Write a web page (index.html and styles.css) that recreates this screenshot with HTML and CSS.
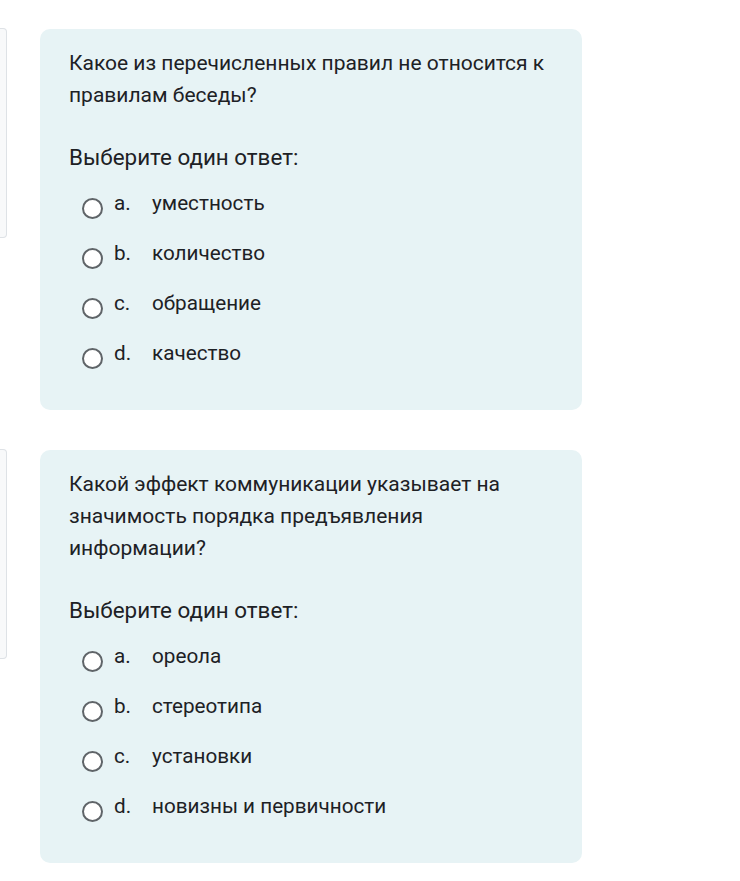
FILE: index.html
```html
<!DOCTYPE html>
<html lang="ru">
<head>
<meta charset="utf-8">
<link rel="stylesheet" href="styles.css">
</head>
<body>
<div class="page">
  <div class="question">
    <div class="info"></div>
    <div class="card">
      <div class="qtext">Какое из перечисленных правил не относится к правилам беседы?</div>
      <div class="prompt">Выберите один ответ:</div>
      <div class="answers">
        <div class="opt"><span class="radio"></span><span class="num">a.</span><span class="label">уместность</span></div>
        <div class="opt"><span class="radio"></span><span class="num">b.</span><span class="label">количество</span></div>
        <div class="opt"><span class="radio"></span><span class="num">c.</span><span class="label">обращение</span></div>
        <div class="opt"><span class="radio"></span><span class="num">d.</span><span class="label">качество</span></div>
      </div>
    </div>
  </div>
  <div class="question">
    <div class="info"></div>
    <div class="card">
      <div class="qtext">Какой эффект коммуникации указывает на значимость порядка предъявления информации?</div>
      <div class="prompt">Выберите один ответ:</div>
      <div class="answers">
        <div class="opt"><span class="radio"></span><span class="num">a.</span><span class="label">ореола</span></div>
        <div class="opt"><span class="radio"></span><span class="num">b.</span><span class="label">стереотипа</span></div>
        <div class="opt"><span class="radio"></span><span class="num">c.</span><span class="label">установки</span></div>
        <div class="opt"><span class="radio"></span><span class="num">d.</span><span class="label">новизны и первичности</span></div>
      </div>
    </div>
  </div>
</div>
</body>
</html>
```
FILE: styles.css
```css
html, body {
  margin: 0;
  padding: 0;
  background: #ffffff;
}
body {
  font-family: Roboto, "Noto Sans", "Liberation Sans", sans-serif;
  color: #1d2125;
}
.page {
  padding-top: 28px;
}
.question {
  display: flex;
  align-items: flex-start;
  gap: 33px;
  margin-bottom: 39px;
}
.info {
  flex-shrink: 0;
  width: 6px;
  height: 208px;
  background: #f8f9fa;
  border: 1px solid #dee2e6;
  border-left: none;
  border-radius: 0 4px 4px 0;
}
.card {
  box-sizing: border-box;
  width: 542px;
  margin-top: 1px;
  background: #e7f3f5;
  border-radius: 10px;
  padding: 18px 30px 32px 29px;
}
.qtext {
  font-size: 21px;
  line-height: 32px;
}
.prompt {
  margin-top: 30px;
  font-size: 22.4px;
  line-height: 32px;
}
.answers {
  margin-top: 5px;
  margin-left: 13px;
}
.opt {
  display: flex;
  align-items: center;
  height: 50px;
  font-size: 20.7px;
}
.radio {
  box-sizing: border-box;
  flex-shrink: 0;
  width: 21px;
  height: 21px;
  border: 2px solid #5f6468;
  border-radius: 50%;
  background: #ffffff;
  margin-top: 10px;
  margin-right: 11px;
}
.num {
  width: 38px;
  flex-shrink: 0;
}
```
